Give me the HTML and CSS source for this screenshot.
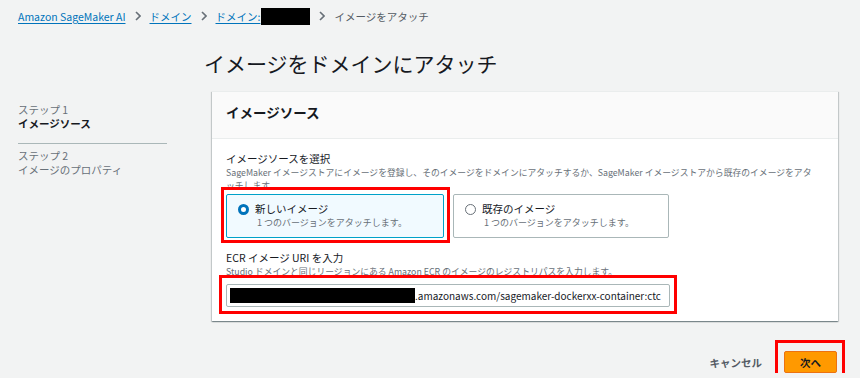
FILE: index.html
```html
<!doctype html>
<html lang="ja">
  <head>
    <meta charset="UTF-8" />
    <title>イメージをドメインにアタッチ</title>
    <link rel="stylesheet" href="styles.css">
  </head>

  <body>
    <!-- Breadcrumbs -->
    <nav class="breadcrumbs">
      <a href="#" class="crumb-link">Amazon SageMaker AI</a>
      <svg class="crumb-sep" width="6" height="10" viewBox="0 0 6 10">
        <path d="M1 1l4 4-4 4" fill="none" stroke="#687078" stroke-width="1.6" />
      </svg>
      <a href="#" class="crumb-link">ドメイン</a>
      <svg class="crumb-sep" width="6" height="10" viewBox="0 0 6 10">
        <path d="M1 1l4 4-4 4" fill="none" stroke="#687078" stroke-width="1.6" />
      </svg>
      <span class="crumb-domain">
        <a href="#" class="crumb-link">ドメイン:</a>
        <span class="redact crumb-redact"></span>
      </span>
      <svg class="crumb-sep" width="6" height="10" viewBox="0 0 6 10">
        <path d="M1 1l4 4-4 4" fill="none" stroke="#687078" stroke-width="1.6" />
      </svg>
      <span class="crumb-current">イメージをアタッチ</span>
    </nav>

    <h1 class="page-title">イメージをドメインにアタッチ</h1>

    <div class="layout">
      <!-- Wizard steps -->
      <ul class="steps">
        <li class="step">
          <span class="step-number">ステップ 1</span>
          <span class="step-name active">イメージソース</span>
        </li>
        <li class="step">
          <span class="step-number">ステップ 2</span>
          <span class="step-name">イメージのプロパティ</span>
        </li>
      </ul>

      <div class="content">
        <!-- Image source -->
        <section class="card">
          <h2 class="card-header">イメージソース</h2>
          <div class="card-body">
            <div class="field">
              <label class="field-label">イメージソースを選択</label>
              <p class="field-desc">SageMaker イメージストアにイメージを登録し、そのイメージをドメインにアタッチするか、SageMaker イメージストアから既存のイメージをアタ<br>ッチします。</p>
              <div class="tiles">
                <div class="tile selected mark">
                  <span class="radio checked"></span>
                  <div class="tile-text">
                    <span class="tile-title">新しいイメージ</span>
                    <span class="tile-desc">1 つのバージョンをアタッチします。</span>
                  </div>
                </div>
                <div class="tile">
                  <span class="radio"></span>
                  <div class="tile-text">
                    <span class="tile-title">既存のイメージ</span>
                    <span class="tile-desc">1 つのバージョンをアタッチします。</span>
                  </div>
                </div>
              </div>
            </div>

            <div class="field field-uri">
              <label class="field-label">ECR イメージ URI を入力</label>
              <p class="field-desc">Studio ドメインと同じリージョンにある Amazon ECR のイメージのレジストリパスを入力します。</p>
              <div class="input-box mark mark-input">
                <span class="redact input-redact"></span>
                <span class="input-value">.amazonaws.com/sagemaker-dockerxx-container:ctc</span>
              </div>
            </div>
          </div>
        </section>

        <div class="actions">
          <button type="button" class="btn-link">キャンセル</button>
          <button type="button" class="btn-primary mark mark-button">次へ</button>
        </div>
      </div>
    </div>
  </body>
</html>
```

FILE: styles.css
```css
body {
  margin: 0;
  background-color: #f2f3f3;
  font-family: "Noto Sans CJK JP", "Noto Sans", sans-serif;
  color: #16191f;
}

.breadcrumbs {
  display: flex;
  align-items: center;
  gap: 9px;
  height: 32px;
  padding-left: 18px;
  font-size: 10.5px;
}

.crumb-link {
  color: #0073bb;
  text-decoration: underline;
  text-underline-offset: 2px;
}

.crumb-domain {
  display: flex;
  align-items: center;
}

.crumb-current {
  color: #545b64;
}

.redact {
  display: inline-block;
  flex-shrink: 0;
  background-color: #000;
}

.crumb-redact {
  width: 49px;
  height: 17px;
  margin-left: 1px;
}

.page-title {
  margin: 17px 0 14px;
  padding-left: 204px;
  font-size: 21px;
  font-weight: 400;
  line-height: 28px;
}

.layout {
  display: grid;
  grid-template-columns: 149px 1fr;
  column-gap: 45px;
  padding: 0 22px 0 18px;
}

.steps {
  list-style: none;
  margin: 0;
  padding: 12px 0 0;
}

.step {
  display: flex;
  flex-direction: column;
  font-size: 10.5px;
  line-height: 14px;
}

.step:first-child {
  padding-bottom: 12px;
  border-bottom: 1px solid #aab7b8;
}

.step + .step {
  padding-top: 5px;
}

.step-number,
.step-name {
  color: #687078;
}

.step-name.active {
  color: #16191f;
  font-weight: 700;
}

.card {
  background-color: #fff;
  border-top: 1px solid #eaeded;
  box-shadow: 0 1px 1px 0 rgba(0, 28, 36, 0.3),
    1px 1px 1px 0 rgba(0, 28, 36, 0.15),
    -1px 1px 1px 0 rgba(0, 28, 36, 0.15);
}

.card-header {
  margin: 0;
  padding: 10px 14px 16px;
  background-color: #fafafa;
  border-bottom: 1px solid #eaeded;
  font-size: 13.5px;
  font-weight: 700;
  line-height: 20px;
}

.card-body {
  padding: 12px 14px 14px;
}

.field-label {
  display: block;
  font-size: 10.5px;
  line-height: 15px;
}

.field-desc {
  margin: 0;
  color: #687078;
  font-size: 8.8px;
  line-height: 13px;
  white-space: nowrap;
}

.tiles {
  display: grid;
  grid-template-columns: 218px 216px;
  gap: 9px;
  margin-top: 2px;
}

.tile {
  display: flex;
  align-items: flex-start;
  gap: 6px;
  padding: 7px 11px 8px;
  border: 1px solid #aab7b8;
  border-radius: 2px;
  background-color: #fff;
}

.tile.selected {
  border-color: #00a1c9;
  background-color: #f1faff;
}

.radio {
  box-sizing: border-box;
  width: 11px;
  height: 11px;
  margin-top: 2px;
  border: 1px solid #687078;
  border-radius: 50%;
  background-color: #fff;
}

.radio.checked {
  border: 3.5px solid #0073bb;
}

.tile-text {
  display: flex;
  flex-direction: column;
}

.tile-title {
  font-size: 10.5px;
  line-height: 14px;
}

.tile-desc {
  margin-left: 2px;
  color: #687078;
  font-size: 9px;
  line-height: 13px;
}

.field-uri {
  margin-top: 12px;
}

.input-box {
  display: flex;
  align-items: center;
  box-sizing: border-box;
  width: 444px;
  height: 23px;
  margin-top: 6px;
  padding: 0 3px;
  border: 1px solid #aab7b8;
  border-radius: 2px;
  background-color: #fff;
  font-size: 10px;
}

.input-redact {
  width: 185px;
  height: 15px;
}

.input-value {
  white-space: nowrap;
}

.actions {
  display: flex;
  justify-content: flex-end;
  align-items: center;
  gap: 22px;
  margin-top: 30px;
  padding-right: 1px;
}

.btn-link {
  padding: 0;
  border: none;
  background: none;
  color: #545b64;
  font-family: inherit;
  font-size: 10.5px;
  font-weight: 700;
}

.btn-primary {
  height: 22px;
  padding: 0 15px;
  border: 1px solid #ec7211;
  border-radius: 2px;
  background-color: #ff9900;
  color: #16191f;
  font-family: inherit;
  font-size: 10.5px;
  font-weight: 700;
  cursor: pointer;
}

/* Red annotation boxes */
.mark {
  position: relative;
}

.mark::after {
  content: "";
  position: absolute;
  inset: -8px -7px -6px -6px;
  border: 3px solid #ff0000;
  pointer-events: none;
}

.mark-input::after {
  inset: -10px -8px -8px -8px;
}

.mark-button::after {
  inset: -12px -9px -12px -10px;
}
```
